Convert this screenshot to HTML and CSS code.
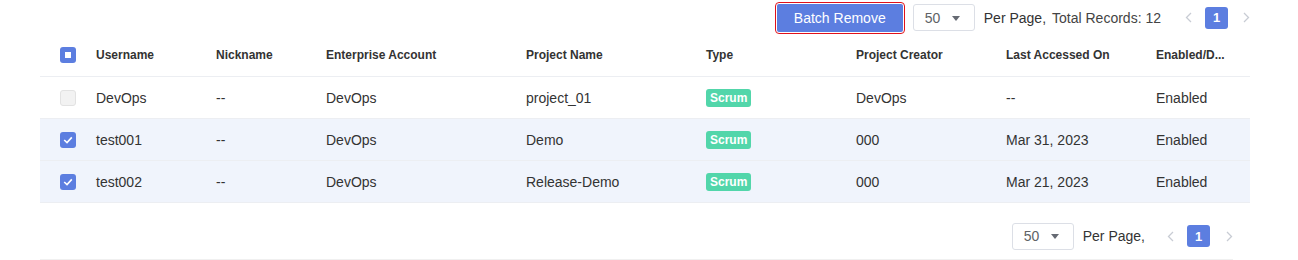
FILE: index.html
```html
<!DOCTYPE html>
<html>
<head>
<meta charset="utf-8">
<link rel="stylesheet" href="styles.css">
</head>
<body>
<div class="page">
  <div class="toolbar">
    <button class="btn-primary">Batch Remove</button>
    <div class="select"><span>50</span><span class="caret"></span></div>
    <span class="per-page">Per Page,</span>
    <span class="total">Total Records: 12</span>
    <span class="arrow prev"><svg width="7" height="11" viewBox="0 0 7 11"><path d="M6 1 L1.5 5.5 L6 10" fill="none" stroke="#c8ccd4" stroke-width="1.3"/></svg></span>
    <span class="page-num">1</span>
    <span class="arrow next"><svg width="7" height="11" viewBox="0 0 7 11"><path d="M1 1 L5.5 5.5 L1 10" fill="none" stroke="#c8ccd4" stroke-width="1.3"/></svg></span>
  </div>

  <table class="grid">
    <colgroup>
      <col class="c0"><col class="c1"><col class="c2"><col class="c3"><col class="c4"><col class="c5"><col class="c6"><col class="c7"><col class="c8">
    </colgroup>
    <thead>
      <tr>
        <th class="chk-cell"><span class="cb cb-ind"></span></th>
        <th>Username</th>
        <th>Nickname</th>
        <th>Enterprise Account</th>
        <th>Project Name</th>
        <th>Type</th>
        <th>Project Creator</th>
        <th>Last Accessed On</th>
        <th>Enabled/D...</th>
      </tr>
    </thead>
    <tbody>
      <tr>
        <td class="chk-cell"><span class="cb cb-off"></span></td>
        <td>DevOps</td>
        <td>--</td>
        <td>DevOps</td>
        <td>project_01</td>
        <td><span class="tag">Scrum</span></td>
        <td>DevOps</td>
        <td>--</td>
        <td>Enabled</td>
      </tr>
      <tr class="sel">
        <td class="chk-cell"><span class="cb cb-on"><svg width="10" height="8" viewBox="0 0 10 8"><path d="M1.2 4 L4 6.6 L8.8 1.4" fill="none" stroke="#fff" stroke-width="1.6"/></svg></span></td>
        <td>test001</td>
        <td>--</td>
        <td>DevOps</td>
        <td>Demo</td>
        <td><span class="tag">Scrum</span></td>
        <td>000</td>
        <td>Mar 31, 2023</td>
        <td>Enabled</td>
      </tr>
      <tr class="sel">
        <td class="chk-cell"><span class="cb cb-on"><svg width="10" height="8" viewBox="0 0 10 8"><path d="M1.2 4 L4 6.6 L8.8 1.4" fill="none" stroke="#fff" stroke-width="1.6"/></svg></span></td>
        <td>test002</td>
        <td>--</td>
        <td>DevOps</td>
        <td>Release-Demo</td>
        <td><span class="tag">Scrum</span></td>
        <td>000</td>
        <td>Mar 21, 2023</td>
        <td>Enabled</td>
      </tr>
    </tbody>
  </table>

  <div class="footer">
    <div class="select"><span>50</span><span class="caret"></span></div>
    <span class="per-page">Per Page,</span>
    <span class="arrow prev2"><svg width="7" height="11" viewBox="0 0 7 11"><path d="M6 1 L1.5 5.5 L6 10" fill="none" stroke="#c8ccd4" stroke-width="1.3"/></svg></span>
    <span class="page-num">1</span>
    <span class="arrow next"><svg width="7" height="11" viewBox="0 0 7 11"><path d="M1 1 L5.5 5.5 L1 10" fill="none" stroke="#c8ccd4" stroke-width="1.3"/></svg></span>
  </div>
</div>
</body>
</html>
```

FILE: styles.css
```css
* { box-sizing: border-box; }
html, body { margin: 0; padding: 0; background: #fff; }
body {
  font-family: "Liberation Sans", Arial, sans-serif;
  font-size: 14px;
  color: #333;
  width: 1298px;
  height: 260px;
  overflow: hidden;
}

.toolbar {
  height: 34px;
  display: flex;
  align-items: center;
  justify-content: flex-end;
  padding-right: 48px;
  padding-top: 1px;
}

.btn-primary {
  width: 126px;
  height: 28px;
  background: #5c7ee0;
  color: #fff;
  border: none;
  border-radius: 2px;
  font-family: "Liberation Sans", Arial, sans-serif;
  font-size: 14px;
  outline: 1px solid #e0111b;
  outline-offset: 1px;
  margin-right: 10px;
  padding: 0;
}

.select {
  width: 62px;
  height: 27px;
  border: 1px solid #dcdfe6;
  border-radius: 3px;
  display: flex;
  align-items: center;
  justify-content: space-between;
  padding: 0 14px 0 11px;
  color: #606266;
  font-size: 14px;
}
.caret {
  width: 0;
  height: 0;
  border-left: 4px solid transparent;
  border-right: 4px solid transparent;
  border-top: 5px solid #666a73;
  margin-top: 1px;
}
.per-page { margin-left: 9px; color: #333; }
.total { margin-left: 6px; color: #444; }

.arrow { display: flex; align-items: center; width: 7px; height: 11px; }
.prev { margin-left: 24px; margin-right: 13px; }
.next { margin-left: 15px; }
.prev2 { margin-left: 22px; margin-right: 13px; }

.page-num {
  width: 23px;
  height: 22px;
  border-radius: 3px;
  background: #5c7ee0;
  color: #fff;
  font-weight: bold;
  font-size: 13px;
  display: flex;
  align-items: center;
  justify-content: center;
}

.grid {
  margin-left: 40px;
  width: 1210px;
  border-collapse: collapse;
  table-layout: fixed;
}
.c0 { width: 40px; }
.c1 { width: 120px; }
.c2 { width: 110px; }
.c3 { width: 200px; }
.c4 { width: 180px; }
.c5 { width: 150px; }
.c6 { width: 150px; }
.c7 { width: 150px; }
.c8 { width: 110px; }

.grid th {
  height: 42px;
  text-align: left;
  font-size: 12px;
  font-weight: bold;
  color: #333;
  padding: 0 0 0 16px;
  border-bottom: 1px solid #eceef2;
  white-space: nowrap;
}
.grid td {
  height: 42px;
  padding: 2px 0 0 16px;
  border-bottom: 1px solid #eceef2;
  white-space: nowrap;
}
.grid .chk-cell { padding-left: 20px; }
.grid tr.sel td { background: #f0f4fc; }

.cb {
  display: flex;
  align-items: center;
  justify-content: center;
  width: 16px;
  height: 16px;
  border-radius: 3px;
}
.cb-ind { background: #5c7ee0; }
.cb-ind::after {
  content: "";
  width: 6px;
  height: 6px;
  background: #fff;
}
.cb-off { background: #f2f2f2; border: 1px solid #e2e2e2; }
.cb-on { background: #5c7ee0; }

.tag {
  display: inline-block;
  background: #52d6aa;
  color: #fff;
  font-size: 12px;
  font-weight: bold;
  line-height: 18px;
  height: 18px;
  padding: 0 4px;
  border-radius: 3px;
  vertical-align: middle;
}

.footer {
  margin-left: 40px;
  width: 1193px;
  height: 57px;
  display: flex;
  align-items: center;
  justify-content: flex-end;
  padding-top: 11px;
  padding-right: 0;
  border-bottom: 1px solid #f0f0f0;
}
.footer .next { margin-left: 16px; margin-right: 0; }
```
